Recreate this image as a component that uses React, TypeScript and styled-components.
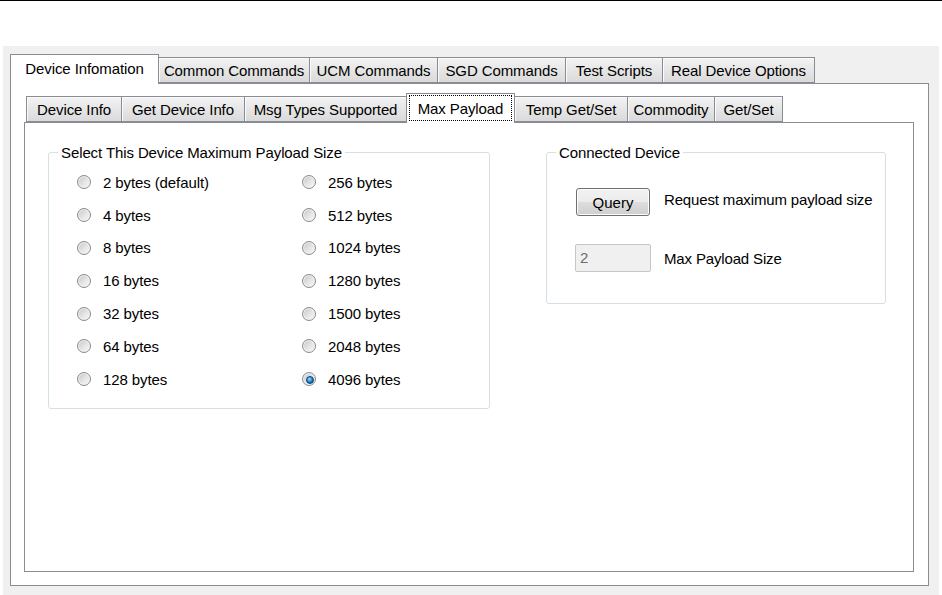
import React from 'react';
import styled, { createGlobalStyle } from 'styled-components';

const GlobalStyle = createGlobalStyle`
  html, body {
    margin: 0;
    padding: 0;
    background: #ffffff;
  }
  body {
    font-family: 'Liberation Sans', Arial, sans-serif;
    font-size: 15px;
    color: #000000;
  }
`;

const TopRule = styled.div`
  height: 1px;
  background: #000000;
`;

const Screen = styled.div`
  margin: 45px 0 0 3px;
  width: 936px;
  height: 549px;
  box-sizing: border-box;
  background: #f0f0f0;
  padding: 8px 0 0 7px;
`;

const TabStrip = styled.div<{ $inset?: number }>`
  display: flex;
  align-items: flex-end;
  height: 29px;
  padding-left: ${p => p.$inset || 0}px;
`;

const Tab = styled.div<{ $width: number; $selected?: boolean }>`
  position: relative;
  z-index: ${p => (p.$selected ? 2 : 1)};
  box-sizing: border-box;
  display: flex;
  align-items: center;
  justify-content: center;
  width: ${p => p.$width}px;
  height: ${p => (p.$selected ? 30 : 26)}px;
  margin-bottom: ${p => (p.$selected ? -1 : 0)}px;
  margin-left: -1px;
  border: 1px solid #898c95;
  border-bottom: ${p => (p.$selected ? 'none' : '1px solid #898c95')};
  padding-bottom: ${p => (p.$selected ? 2 : 0)}px;
  background: ${p => (p.$selected ? '#ffffff' : 'linear-gradient(#f3f3f3, #e6e6e6 50%, #dadada)')};
  box-shadow: ${p => (p.$selected ? 'none' : 'inset 1px 1px 0 #fbfbfb')};
  white-space: nowrap;
  line-height: 17px;
  letter-spacing: -0.1px;

  &:first-child {
    margin-left: 0;
  }
`;

const FocusRing = styled.span`
  box-sizing: border-box;
  display: flex;
  align-items: center;
  justify-content: center;
  align-self: stretch;
  flex: 1;
  margin: 1px 2px 0 2px;
  border: 1px dotted #000000;
`;

const TabPage = styled.div<{ $width: number; $height: number }>`
  position: relative;
  box-sizing: border-box;
  width: ${p => p.$width}px;
  height: ${p => p.$height}px;
  border: 1px solid #898c95;
  background: #ffffff;
`;

const OuterBody = styled.div`
  padding: 9px 0 0 13px;
`;

const PayloadLayout = styled.div`
  display: flex;
  align-items: flex-start;
  gap: 56px;
  padding: 21px 0 0 23px;
`;

const GroupBox = styled.fieldset<{ $width: number; $height: number }>`
  box-sizing: border-box;
  width: ${p => p.$width}px;
  height: ${p => p.$height}px;
  margin: 0;
  padding: 5px 0 0 9px;
  border: 1px solid #d5dfe5;
  border-radius: 3px;
  min-width: 0;
`;

const GroupTitle = styled.legend`
  padding: 0 3px;
  line-height: 17px;
  letter-spacing: -0.1px;
`;

const RadioGrid = styled.div`
  display: grid;
  grid-template-columns: 225px auto;
  grid-template-rows: repeat(7, 32.8px);
  grid-auto-flow: column;
  margin-left: 19px;
`;

const RadioOption = styled.label`
  display: flex;
  align-items: center;
  gap: 12px;
  line-height: 17px;
  white-space: nowrap;
  letter-spacing: -0.1px;
`;

const RadioDot = styled.span<{ $checked?: boolean }>`
  position: relative;
  box-sizing: border-box;
  width: 14px;
  height: 14px;
  border-radius: 50%;
  border: 1px solid #8a8b8b;
  background: linear-gradient(135deg, #c4c4c4 0%, #e3e3e3 50%, #fafafa 100%);
  box-shadow: inset 0 0 0 1px #f2f2f2;

  &::after {
    content: '';
    display: ${p => (p.$checked ? 'block' : 'none')};
    position: absolute;
    left: 3px;
    top: 3px;
    width: 6px;
    height: 6px;
    border-radius: 50%;
    border: 1px solid #0d3c6e;
    background: radial-gradient(circle at 40% 35%, #9be2ff 0%, #2a93da 45%, #0c5396 85%);
  }
`;

const DeviceGrid = styled.div`
  display: grid;
  grid-template-columns: 74px auto;
  grid-template-rows: 28px 28px;
  column-gap: 14px;
  row-gap: 28px;
  margin: 22px 0 0 20px;
  align-items: center;
`;

const Button = styled.button`
  box-sizing: border-box;
  width: 74px;
  height: 28px;
  padding: 0;
  border: 1px solid #707070;
  border-radius: 3px;
  background: linear-gradient(#f2f2f2 0%, #ebebeb 50%, #dddddd 51%, #cfcfcf 100%);
  box-shadow: inset 0 0 0 1px #fcfcfc;
  font: inherit;
  color: #000000;
`;

const ReadOnlyField = styled.div`
  box-sizing: border-box;
  width: 76px;
  height: 28px;
  margin-left: -1px;
  padding: 0 4px;
  border: 1px solid #c4c7ca;
  border-radius: 2px;
  background: #f0f0f0;
  color: #6d6d6d;
  line-height: 26px;
`;

const FieldLabel = styled.span<{ $lift?: number }>`
  line-height: 17px;
  white-space: nowrap;
  letter-spacing: -0.15px;
  margin-top: ${p => -(p.$lift || 0)}px;
`;

const outerTabs = [
  { label: 'Device Infomation', width: 149 },
  { label: 'Common Commands', width: 152 },
  { label: 'UCM Commands', width: 129 },
  { label: 'SGD Commands', width: 129 },
  { label: 'Test Scripts', width: 98 },
  { label: 'Real Device Options', width: 153 },
];

const innerTabs = [
  { label: 'Device Info', width: 96 },
  { label: 'Get Device Info', width: 124 },
  { label: 'Msg Types Supported', width: 163 },
  { label: 'Max Payload', width: 109 },
  { label: 'Temp Get/Set', width: 114 },
  { label: 'Commodity', width: 88 },
  { label: 'Get/Set', width: 69 },
];

const sizes = [2, 4, 8, 16, 32, 64, 128, 256, 512, 1024, 1280, 1500, 2048, 4096];

const App = () => {
  const selectedSize = 4096;

  return (
    <>
      <GlobalStyle />
      <TopRule />
      <Screen>
        <TabStrip>
          {outerTabs.map((tab, i) => (
            <Tab key={tab.label} $width={tab.width} $selected={i === 0}>
              {tab.label}
            </Tab>
          ))}
        </TabStrip>
        <TabPage $width={919} $height={503}>
          <OuterBody>
            <TabStrip $inset={2}>
              {innerTabs.map(tab =>
                tab.label === 'Max Payload' ? (
                  <Tab key={tab.label} $width={tab.width} $selected>
                    <FocusRing>{tab.label}</FocusRing>
                  </Tab>
                ) : (
                  <Tab key={tab.label} $width={tab.width}>
                    {tab.label}
                  </Tab>
                )
              )}
            </TabStrip>
            <TabPage $width={890} $height={450}>
              <PayloadLayout>
                <GroupBox $width={442} $height={265}>
                  <GroupTitle>Select This Device Maximum Payload Size</GroupTitle>
                  <RadioGrid>
                    {sizes.map(size => (
                      <RadioOption key={size}>
                        <RadioDot $checked={size === selectedSize} />
                        {size === 2 ? '2 bytes (default)' : `${size} bytes`}
                      </RadioOption>
                    ))}
                  </RadioGrid>
                </GroupBox>
                <GroupBox $width={340} $height={160}>
                  <GroupTitle>Connected Device</GroupTitle>
                  <DeviceGrid>
                    <Button>Query</Button>
                    <FieldLabel $lift={5}>Request maximum payload size</FieldLabel>
                    <ReadOnlyField>2</ReadOnlyField>
                    <FieldLabel>Max Payload Size</FieldLabel>
                  </DeviceGrid>
                </GroupBox>
              </PayloadLayout>
            </TabPage>
          </OuterBody>
        </TabPage>
      </Screen>
    </>
  );
};

export default App;
